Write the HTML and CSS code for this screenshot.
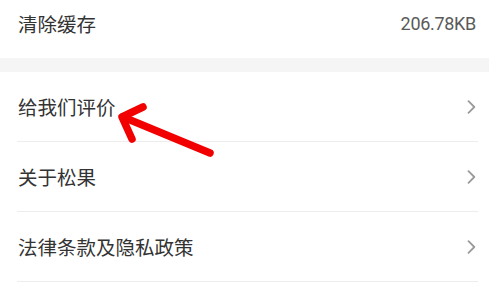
FILE: index.html
```html
<!DOCTYPE html>
<html lang="zh-CN">
<head>
<meta charset="utf-8">
<link rel="stylesheet" href="styles.css">
</head>
<body>
<div class="page">
  <section class="group group-first">
    <div class="row row-last">
      <span class="label">清除缓存</span>
      <span class="value">206.78KB</span>
    </div>
  </section>
  <div class="gap"></div>
  <section class="group">
    <div class="row">
      <span class="label">给我们评价</span>
      <svg class="chev" width="9" height="14" viewBox="0 0 9 14"><path d="M1.5 1.2 L7.3 7 L1.5 12.8" fill="none" stroke="#9a9a9a" stroke-width="1.8" stroke-linecap="round" stroke-linejoin="round"/></svg>
    </div>
    <div class="row">
      <span class="label">关于松果</span>
      <svg class="chev" width="9" height="14" viewBox="0 0 9 14"><path d="M1.5 1.2 L7.3 7 L1.5 12.8" fill="none" stroke="#9a9a9a" stroke-width="1.8" stroke-linecap="round" stroke-linejoin="round"/></svg>
    </div>
    <div class="row">
      <span class="label">法律条款及隐私政策</span>
      <svg class="chev" width="9" height="14" viewBox="0 0 9 14"><path d="M1.5 1.2 L7.3 7 L1.5 12.8" fill="none" stroke="#9a9a9a" stroke-width="1.8" stroke-linecap="round" stroke-linejoin="round"/></svg>
    </div>
  </section>
  <svg class="arrow" width="489" height="284" viewBox="0 0 489 284">
    <g fill="none" stroke="#f20000" stroke-width="7.5" stroke-linecap="round" stroke-linejoin="round">
      <path d="M210 153 L123 117"/>
      <path d="M143 107 L122 117 L132 139"/>
    </g>
  </svg>
</div>
</body>
</html>
```

FILE: styles.css
```css
html, body {
  margin: 0;
  padding: 0;
  background: #ffffff;
}
.page {
  position: relative;
  width: 489px;
  height: 284px;
  overflow: hidden;
  font-family: "Noto Sans CJK SC", "Roboto", sans-serif;
}
.group {
  background: #ffffff;
  display: flex;
  flex-direction: column;
}
.group-first {
  margin-top: -12px;
}
.row {
  height: 70px;
  box-sizing: border-box;
  margin: 0 11px 0 17px;
  padding: 0 2px 0 1px;
  border-bottom: 1px solid #ededed;
  display: flex;
  align-items: center;
  justify-content: space-between;
}
.row-last {
  border-bottom: none;
}
.label {
  font-size: 19.5px;
  color: #333333;
}
.value {
  font-family: "Roboto", "Noto Sans", sans-serif;
  font-size: 18px;
  color: #5a5a5a;
  letter-spacing: -0.3px;
}
.chev {
  display: block;
}
.gap {
  height: 14px;
  background: #f5f5f5;
}
.arrow {
  position: absolute;
  left: 0;
  top: 0;
  pointer-events: none;
}
```
